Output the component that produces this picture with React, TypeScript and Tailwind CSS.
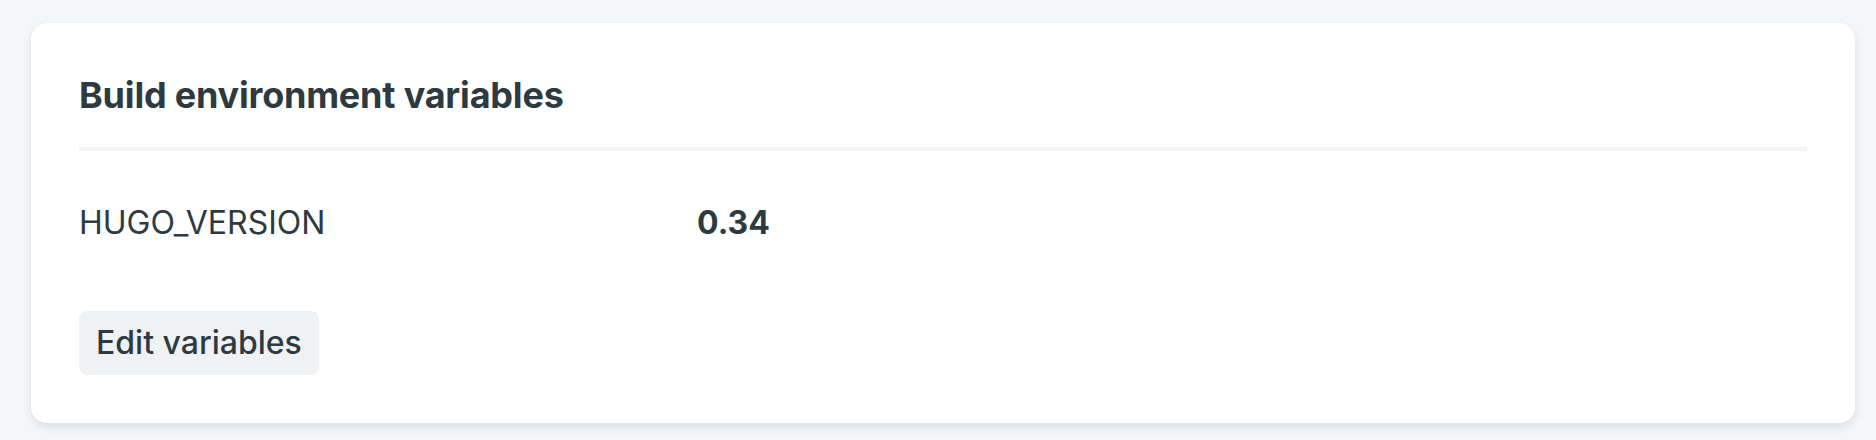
export default function App() {
  return (
    <div className="min-h-[440px] w-full bg-[#f5f6f7] pt-[23px] pl-[31px] pr-[21px] font-['Inter',sans-serif] text-[#2e3a41]">
      <div className="rounded-2xl bg-white p-12 shadow-[0_4px_8px_rgba(14,30,37,0.12)]">
        <div className="border-b-4 border-[#f3f4f5] pb-7">
          <h2 className="text-[36px] leading-[48px] font-bold tracking-[-0.2px]">
            Build environment variables
          </h2>
        </div>
        <dl className="mt-12 grid grid-cols-[618px_1fr] text-[32px] leading-[48px]">
          <dt className="font-normal">HUGO_VERSION</dt>
          <dd className="font-bold">0.34</dd>
        </dl>
        <button className="mt-16 rounded-lg bg-[#eff1f3] px-[17px] py-[10px] text-[32px] leading-[44px] font-medium">
          Edit variables
        </button>
      </div>
    </div>
  );
}
